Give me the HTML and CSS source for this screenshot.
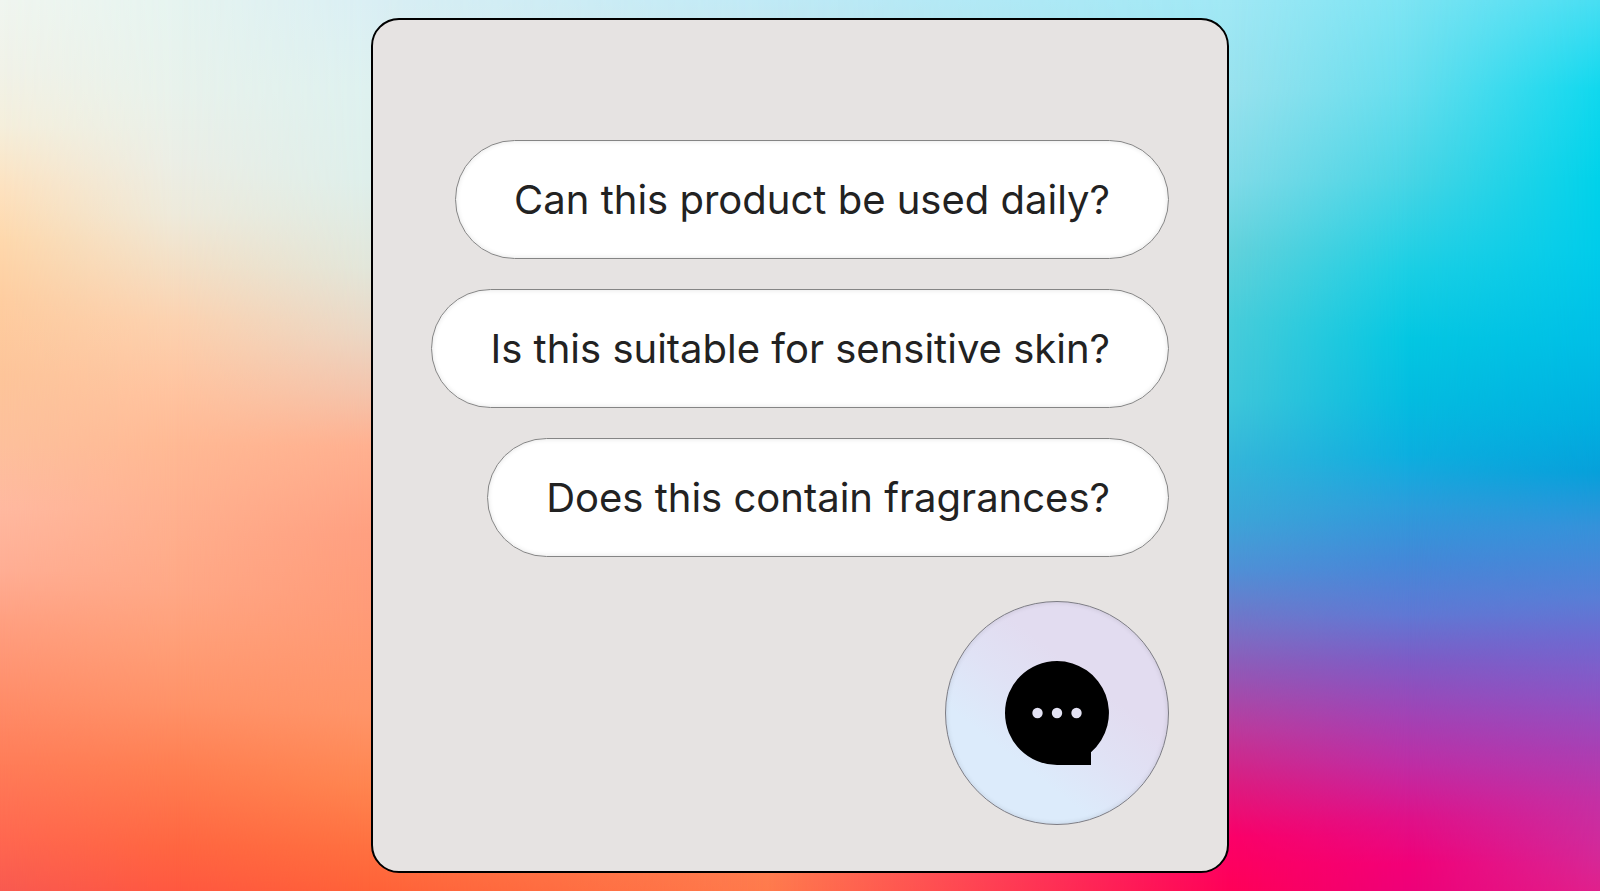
FILE: index.html
```html
<!DOCTYPE html>
<html lang="en">
<head>
<meta charset="utf-8">
<meta name="viewport" content="width=device-width, initial-scale=1">
<title>Product questions</title>
<link rel="stylesheet" href="styles.css">
</head>
<body class="page">
<div class="backdrop" aria-hidden="true">
<div class="wash wash-1"></div>
<div class="wash wash-2"></div>
<div class="wash wash-3"></div>
<div class="wash wash-4"></div>
<div class="wash wash-5"></div>
<div class="wash wash-6"></div>
<div class="wash wash-7"></div>
</div>
<main class="card">
<div class="questions">
<button class="pill" type="button">Can this product be used daily?</button>
<button class="pill" type="button">Is this suitable for sensitive skin?</button>
<button class="pill" type="button">Does this contain fragrances?</button>
</div>
<button class="launcher" type="button" aria-label="Open chat">
<svg class="bubble" viewBox="0 0 104 104" aria-hidden="true">
<path d="M52 0a52 52 0 0 1 34 91.300V104H52A52 52 0 0 1 52 0Z" fill="#000"/>
<circle cx="32.500" cy="52" r="5.200" fill="#e3e2f3"/>
<circle cx="52" cy="52" r="5.200" fill="#e3e2f3"/>
<circle cx="71.500" cy="52" r="5.200" fill="#e3e2f3"/>
</svg>
</button>
</main>
</body>
</html>
```
FILE: styles.css
```css
* { box-sizing: border-box; }

.page {
  margin: 0;
  min-height: 100vh;
  padding: 18px;
  display: flex;
  justify-content: center;
  align-items: center;
  font-family: Inter, "Liberation Sans", sans-serif;
}

/* Vertical colour washes, each one faded in over the previous from left to right. */
.backdrop {
  position: fixed;
  inset: 0;
  z-index: -1;
  display: grid;
}

.wash { grid-area: 1 / 1; }

.wash-1 {
  background: linear-gradient(#f0f6f0, #f1f2e8 8%, #f5efdc 14%, #fde2c0 21%, #fed8ac 27%, #fecda0 34%, #fdc59a 42%, #fdc09c 50%, #ffb9a0 57%, #ffae94 64%, #ff9f80 70%, #ff8c68 79%, #ff7c58 86%, #ff6850 94%, #f95a50);
}

.wash-2 {
  background: linear-gradient(#e6f4f0, #e8f2ec 10%, #ebeee6 18%, #eeeadb 24%, #f4dfc5 30%, #fcd2b0 36%, #ffc39f 44%, #ffb994 50%, #ffb18f 57%, #ffa886 66%, #ff9f78 72%, #ff9268 79%, #ff7f52 86%, #ff6641 95%, #ff5840);
  mask-image: linear-gradient(90deg, transparent, #000 11%);
}

.wash-3 {
  background: linear-gradient(#daeff4, #def1ef 10%, #deefeb 20%, #e2e6da 30%, #ead8c6 37%, #f4c4ac 44%, #ffb090 50%, #ff9f80 60%, #ff9a76 70%, #ff9468 80%, #ff8550 88%, #ff7040 95%, #ff6238);
  mask-image: linear-gradient(90deg, transparent 11%, #000 23%);
}

.wash-4 {
  background: linear-gradient(#c0eaf6, #ff7a4c);
  mask-image: linear-gradient(90deg, transparent 23%, #000 48%);
}

.wash-5 {
  background: linear-gradient(#a0e8f5, #98e2ee 10%, #80dbe8 20%, #62d2dc 28%, #48cdda 36%, #3ec6da 45%, #34b5da 52%, #3ca6d8 58%, #5090d6 64%, #7474c8 70%, #9655b4 76%, #bc3a9c 82%, #dc1c80 88%, #fb0068 94%, #ff0058);
  mask-image: linear-gradient(90deg, transparent 48%, #000 77%);
}

.wash-6 {
  background: linear-gradient(#7ce4f3, #66deee 10%, #48d5e5 20%, #1ccfe4 30%, #04c7e2 38%, #04bce0 45%, #0cafdf 51%, #2c9cdb 57%, #4488d8 63%, #6078d4 69%, #7d5cc6 74%, #a044b6 80%, #c02ca4 86%, #e01088 92%, #f20078 97%, #ee0078);
  mask-image: linear-gradient(90deg, transparent 77%, #000 88%);
}

.wash-7 {
  background: linear-gradient(#48def2, #10d8ee 10%, #00d2ea 20%, #00ccea 28%, #00bfe6 38%, #00b0e0 47%, #06a0da 53%, #3492da 59%, #587ed6 67%, #7068d0 72%, #8c54c4 78%, #a840b4 84%, #c430a4 90%, #d42898 96%, #e0208c);
  mask-image: linear-gradient(90deg, transparent 88%, #000);
}

.card {
  width: 100%;
  max-width: 858px;
  padding: 120px 58px 46px;
  display: flex;
  flex-direction: column;
  align-items: flex-end;
  gap: 44px;
  background: #e6e3e2;
  border: 2px solid #000;
  border-radius: 28px;
}

.questions {
  display: flex;
  flex-direction: column;
  align-items: flex-end;
  gap: 30px;
}

.pill {
  min-height: 119px;
  padding: 24px 58px;
  font-family: inherit;
  font-size: 40px;
  line-height: 56px;
  color: #222;
  background: #fff;
  border: 1px solid #858585;
  border-radius: 60px;
  box-shadow: inset 0 0 5px rgba(0, 0, 0, 0.12);
}

.launcher {
  width: 224px;
  height: 224px;
  padding: 0;
  display: grid;
  place-items: center;
  background: linear-gradient(38deg, #dcebfb 30%, #e0e2f5 48%, #e2dcf0 65%);
  border: 1px solid #7c7c84;
  border-radius: 50%;
  box-shadow: inset 0 0 5px rgba(0, 0, 0, 0.12);
}

.bubble {
  width: 104px;
  height: 104px;
}
```
